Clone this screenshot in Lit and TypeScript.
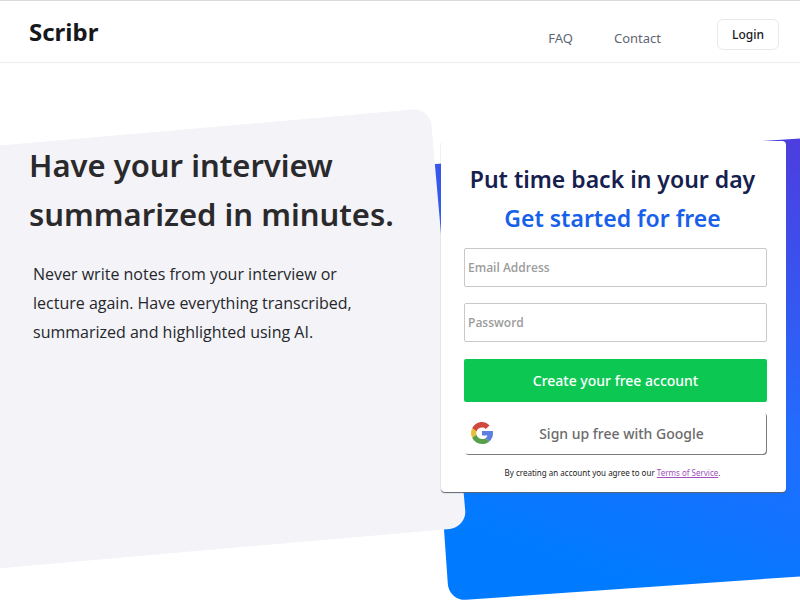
import { LitElement, html, css } from "lit";
import { customElement } from "lit/decorators.js";

@customElement("site-header")
class SiteHeader extends LitElement {
  static styles = css`
    :host {
      display: block;
    }
    .bar {
      display: flex;
      align-items: center;
      justify-content: space-between;
      box-sizing: border-box;
      height: 63px;
      padding: 0 21px 0 29px;
      background: #fff;
      border-top: 1px solid #dadada;
      border-bottom: 1px solid #ececee;
    }
    .brand {
      color: #16181b;
      font-size: 24px;
      font-weight: 700;
      line-height: 32px;
      text-decoration: none;
    }
    .nav {
      display: flex;
      align-items: center;
      padding-top: 6px;
      font-size: 13px;
    }
    .link {
      margin-right: 41px;
      padding-top: 6px;
      color: #5f6673;
      line-height: 20px;
      text-decoration: none;
    }
    .login {
      height: 31px;
      margin-left: 15px;
      padding: 0 14px;
      border: 1px solid #e9e9ec;
      border-radius: 6px;
      background: #fff;
      color: #17191c;
      font: 500 12px "Noto Sans", sans-serif;
    }
  `;

  render() {
    return html`
      <header class="bar">
        <a class="brand" href="#">Scribr</a>
        <nav class="nav">
          <a class="link" href="#faq">FAQ</a>
          <a class="link" href="#contact">Contact</a>
          <button class="login" type="button">Login</button>
        </nav>
      </header>
    `;
  }
}

@customElement("signup-card")
class SignupCard extends LitElement {
  static styles = css`
    :host {
      display: block;
    }
    .card {
      display: flex;
      flex-direction: column;
      box-sizing: border-box;
      padding: 19px 19px 12px 23px;
      border-radius: 4px;
      background: #fff;
      box-shadow: 0 1px 1px #5c6470;
      text-align: center;
    }
    .title {
      margin: 0;
      padding-right: 6px;
      color: #16204f;
      font-size: 23px;
      font-weight: 600;
      line-height: 39px;
      white-space: nowrap;
    }
    .accent {
      display: block;
      color: #1660ea;
    }
    .field {
      box-sizing: border-box;
      width: 100%;
      height: 39px;
      margin: 0 0 16px;
      padding: 0 3px;
      border: 1px solid #c9c9c9;
      border-radius: 2px;
      background: #fff;
      color: #222;
      font: 600 12px "Open Sans", "Noto Sans", sans-serif;
    }
    .field::placeholder {
      color: #9c9c9c;
      opacity: 1;
    }
    .form {
      display: flex;
      flex-direction: column;
      margin-top: 10px;
    }
    .create {
      height: 43px;
      margin-top: 1px;
      border: 0;
      border-radius: 2px;
      background: #0cc853;
      color: #fff;
      font: 500 14px "Noto Sans", sans-serif;
    }
    .google {
      display: grid;
      grid-template-columns: 22px 1fr;
      align-items: center;
      height: 42px;
      margin: 10px 1px 0 0;
      padding: 0 16px 0 7px;
      border: 0;
      border-radius: 4px;
      background: #fff;
      box-shadow: 1px 1px 0 #7c7c7c;
      color: #6b6b6b;
      font: 500 14px "Noto Sans", sans-serif;
    }
    .logo {
      width: 22px;
      height: 22px;
    }
    .terms {
      margin: 12px 0 0;
      padding-right: 6px;
      color: #222;
      font-size: 8px;
      line-height: 14px;
    }
    .terms-link {
      color: #a04fc0;
    }
  `;

  render() {
    return html`
      <section class="card">
        <h2 class="title">
          Put time back in your day
          <span class="accent">Get started for free</span>
        </h2>
        <form class="form">
          <input class="field" type="email" placeholder="Email Address" aria-label="Email Address" />
          <input class="field" type="password" placeholder="Password" aria-label="Password" />
          <button class="create" type="submit">Create your free account</button>
          <button class="google" type="button">
            <svg class="logo" viewBox="0 0 48 48" aria-hidden="true">
              <path fill="#cf4a3c" d="M24 12c3.200 0 6 1.100 8.200 3.100l8.200-7.600C36 3.200 30.500 0 24 0 14.600 0 6.500 5.600 2.600 13.700l9.400 6.800C13.600 15.600 18.300 12 24 12z" />
              <path fill="#5c7fe0" d="M48 24.500c0-1.700-.2-3.200-.5-4.700H24v9.400h12c-.6 2.600-2.100 4.700-4.500 6.200l8.600 7C45.300 38 48 31.800 48 24.500z" />
              <path fill="#e8bf38" d="M12 28c-.4-1.300-.6-2.600-.6-4s.2-2.500.6-3.700l-9.400-6.600C.9 16.900 0 20.300 0 24s.9 7.200 2.600 10.400z" />
              <path fill="#5a9e4c" d="M24 48c6.500 0 12-2.100 16.100-5.600l-8.600-7c-2 1.200-4.500 1.900-7.500 1.900-5.600 0-10.300-3.900-12-9.300l-9.400 6.400C6.500 42.500 14.600 48 24 48z" />
            </svg>
            <span>Sign up free with Google</span>
          </button>
        </form>
        <p class="terms">
          By creating an account you agree to our
          <a class="terms-link" href="#terms">Terms of Service</a>.
        </p>
      </section>
    `;
  }
}

@customElement("app-root")
class AppRoot extends LitElement {
  static styles = css`
    :host {
      display: flex;
      flex-direction: column;
      min-height: 100vh;
      background: #fff;
      font-family: "Noto Sans", sans-serif;
    }
    .hero {
      position: relative;
      flex: 1;
      display: grid;
      grid-template-columns: 412fr 345fr;
      align-items: start;
      padding: 78px 14px 0 29px;
      overflow: hidden;
    }
    .backdrop {
      position: absolute;
      inset: 0;
      width: 100%;
      height: 100%;
    }
    .pitch,
    .signup {
      position: relative;
    }
    .headline {
      margin: 0;
      color: #2a2a2c;
      font-size: 31px;
      font-weight: 600;
      line-height: 49px;
    }
    .lead {
      max-width: 330px;
      margin: 21px 0 0 4px;
      color: #26272b;
      font-family: "Open Sans", "Noto Sans", sans-serif;
      font-size: 16px;
      line-height: 29px;
    }
  `;

  render() {
    return html`
      <site-header></site-header>
      <main class="hero">
        <svg class="backdrop" viewBox="0 63 800 537" preserveAspectRatio="none" aria-hidden="true">
          <defs>
            <linearGradient id="sky" gradientUnits="userSpaceOnUse" x1="560" y1="560" x2="720" y2="100">
              <stop offset="0" stop-color="#007bff" />
              <stop offset="0.4" stop-color="#226cff" />
              <stop offset="1" stop-color="#4f3bdd" />
            </linearGradient>
            <clipPath id="tilt">
              <rect x="449" y="164" width="500" height="437" rx="17" transform="rotate(-4 449 601)" />
            </clipPath>
          </defs>
          <rect x="400" y="63" width="400" height="537" fill="url(#sky)" clip-path="url(#tilt)" />
          <rect x="-70" y="108" width="500" height="421" rx="17" fill="#f3f3f8" transform="rotate(-5 430 108)" />
        </svg>
        <div class="pitch">
          <h1 class="headline">Have your interview<br />summarized in minutes.</h1>
          <p class="lead">
            Never write notes from your interview or lecture again. Have everything transcribed,
            summarized and highlighted using AI.
          </p>
        </div>
        <signup-card class="signup"></signup-card>
      </main>
    `;
  }
}
